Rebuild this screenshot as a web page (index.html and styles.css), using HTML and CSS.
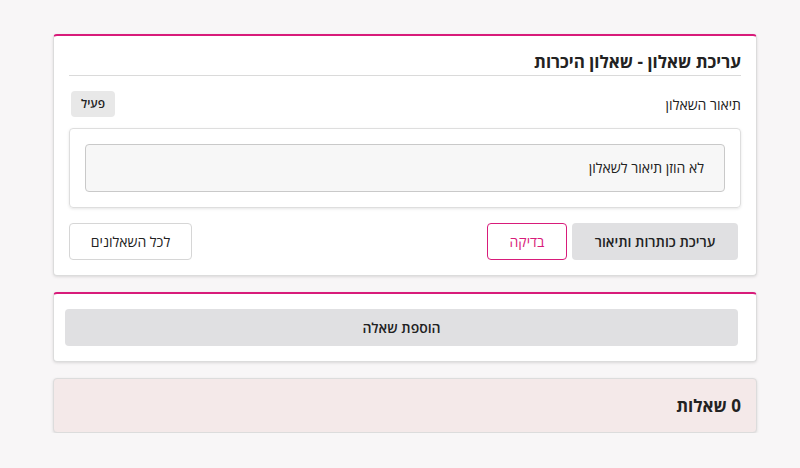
FILE: index.html
```html
<!DOCTYPE html>
<html lang="he" dir="rtl">
<head>
    <meta charset="UTF-8">
    <meta name="viewport" content="width=device-width, initial-scale=1.0">
    <title>עריכת שאלון</title>
    <link rel="stylesheet" href="styles.css">
</head>
<body>
    <div class="container">
        <div class="card card-accent">
            <h2 class="card-title">עריכת שאלון - שאלון היכרות</h2>
            <div class="desc-row">
                <span class="desc-label">תיאור השאלון</span>
                <span class="badge">פעיל</span>
            </div>
            <div class="desc-box">
                <div class="desc-field">לא הוזן תיאור לשאלון</div>
            </div>
            <div class="actions">
                <button class="btn btn-gray">עריכת כותרות ותיאור</button>
                <button class="btn btn-outline">בדיקה</button>
                <button class="btn btn-white">לכל השאלונים</button>
            </div>
        </div>

        <div class="card card-accent card-add">
            <button class="btn btn-gray btn-wide">הוספת שאלה</button>
        </div>

        <div class="card card-count">
            <h3>0 שאלות</h3>
        </div>
    </div>
</body>
</html>
```

FILE: styles.css
```css
* {
    margin: 0;
    padding: 0;
    box-sizing: border-box;
    font-family: "Open Sans", "Liberation Sans", sans-serif;
}

body {
    background: #f8f6f7;
    color: #222;
}

.container {
    width: 704px;
    margin: 34px 43px 0 0;
    display: flex;
    flex-direction: column;
    gap: 16px;
}

.card {
    background: #fff;
    border: 1px solid #dcdcdc;
    border-radius: 4px;
    box-shadow: 0 1px 3px rgba(0, 0, 0, 0.12);
    padding: 14px 15px 15px;
}

.card-accent {
    border-top: 2px solid #d81b7a;
}

.card-title {
    font-size: 17px;
    font-weight: 700;
    line-height: 24px;
    padding-bottom: 1px;
    border-bottom: 1px solid #dadada;
}

.desc-row {
    display: flex;
    justify-content: space-between;
    align-items: center;
    margin-top: 15px;
}

.desc-label {
    font-size: 14px;
}

.badge {
    background: #e8e8e8;
    border-radius: 4px;
    font-size: 12px;
    font-weight: 600;
    padding: 0 10px;
    height: 26px;
    line-height: 26px;
    margin-left: 2px;
}

.desc-box {
    margin-top: 11px;
    border: 1px solid #dedede;
    border-radius: 4px;
    box-shadow: 0 1px 3px rgba(0, 0, 0, 0.1);
    padding: 15px;
}

.desc-field {
    height: 48px;
    background: #f7f7f7;
    border: 1px solid #c9c9c9;
    border-radius: 4px;
    padding: 0 20px;
    font-size: 14px;
    line-height: 46px;
}

.actions {
    display: flex;
    gap: 5px;
    margin-top: 15px;
    padding-right: 3px;
}

.btn {
    height: 37px;
    border-radius: 4px;
    font-size: 14px;
    border: 1px solid transparent;
    padding: 0 20px;
    color: #222;
    cursor: pointer;
}

.btn-gray {
    background: #e0e0e2;
    font-weight: 600;
    width: 166px;
}

.btn-outline {
    background: #fff;
    border-color: #d81b7a;
    color: #d81b7a;
    width: 80px;
}

.btn-white {
    background: #fff;
    border-color: #d6d6d6;
    margin-right: auto;
    width: 123px;
}

.card-add {
    padding: 15px 18px 15px 11px;
}

.btn-wide {
    width: 100%;
}

.card-count {
    background: #f4e9e9;
    padding: 0 15px;
    height: 55px;
    display: flex;
    align-items: center;
}

.card-count h3 {
    font-size: 17px;
    font-weight: 700;
}
```
